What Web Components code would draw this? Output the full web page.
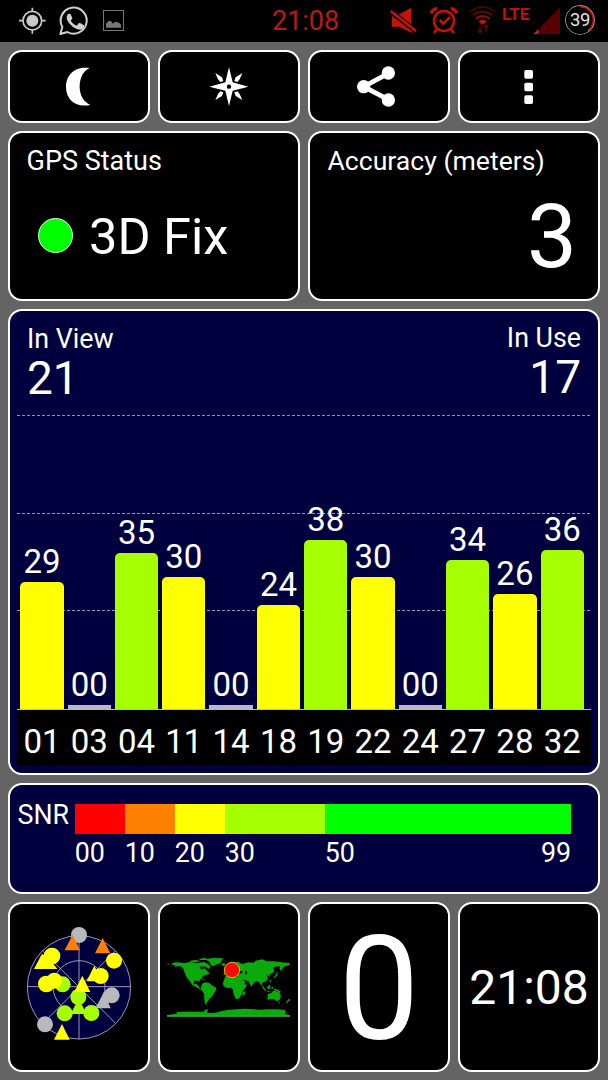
<!DOCTYPE html>
<html lang="en">
<head>
<meta charset="utf-8">
<title>GPS Status</title>
<style>
  body {
    margin: 0;
    width: 608px;
    height: 1080px;
    overflow: hidden;
    background: #646464;
    color: #fff;
    font-family: Roboto, "Liberation Sans", sans-serif;
    line-height: 1;
  }
</style>
</head>
<body>
<gps-screen></gps-screen>

<script>
function define(name, html, setup) {
  const template = document.createElement("template");
  template.innerHTML = html;
  customElements.define(name, class extends HTMLElement {
    constructor() {
      super();
      this.attachShadow({ mode: "open" });
      this.shadowRoot.append(template.content.cloneNode(true));
    }
    connectedCallback() {
      if (setup) setup(this, this.shadowRoot);
    }
  });
}

// every icon is drawn on a grid three times finer than its box
const ICONS = {
  target: [55, 18, 84, 90, `
    <circle cx="98" cy="62" r="28" fill="none" stroke="#c9c9c9" stroke-width="5"/>
    <circle cx="98" cy="62" r="18" fill="#c9c9c9"/>
    <path d="M98 23v13M98 88v13M58 62h13M124 62h14" stroke="#c9c9c9" stroke-width="5"/>`],
  phone: [174, 18, 93, 90, `
    <path d="M181 102L187 81A39 39 0 1 1 202 96Z" fill="none" stroke="#d0d0d0" stroke-width="6" stroke-linejoin="round"/>
    <path d="M203 43q5-4 9 0l5 11q0 4-5 8q7 11 18 15l6-7q3-2 6 0l10 6q2 10-9 13q-10 2-24-8q-14-11-18-22q-2-10 2-16z" fill="#d0d0d0"/>`],
  image: [306, 27, 69, 69, `
    <rect x="310.500" y="31.500" width="60" height="60" fill="none" stroke="#777" stroke-width="3"/>
    <path d="M318 83V72l7-8q4-3 8 0l6 7 6-5q4-2 7 1l7 3 4 4v9z" fill="#777"/>`],
  mute: [252, 15, 90, 90, `
    <path d="M264 45h17l41-22v58l4 18-42-19h-20z" fill="#c41308"/>
    <path d="M256 31L344 101" stroke="#000" stroke-width="16"/>
    <path d="M260 33L336 93" stroke="#c41308" stroke-width="8"/>
    <path d="M276 60L322 96" stroke="#c41308" stroke-width="5"/>`],
  alarm: [375, 15, 90, 90, `
    <g fill="none" stroke="#c41308" stroke-width="7.500">
      <circle cx="420" cy="63" r="30"/><path d="M407 60l11 11 20-20M399 87l-9 12M441 87l9 12"/>
      <path d="M381 40q5-12 18-15M459 40q-5-12-18-15" stroke-width="9"/>
    </g>`],
  wifi: [492, 12, 90, 93, `
    <g fill="none" stroke-width="6">
      <path d="M499 35q36-28 74 0" stroke="#420500"/>
      <path d="M507 45q29-21 58 0" stroke="#650900"/>
      <path d="M515 56q21-16 42 0" stroke="#980e06"/>
    </g>
    <path d="M523 64q13-9 26 0l-13 10z" fill="#c41308"/>
    <path d="M528 78v19M522 91l6 7 6-7M546 97V76M540 82l6-7 6 7" fill="none" stroke="#650900" stroke-width="4"/>`],
  signal: [687, 21, 84, 84, `
    <path d="M768 22v80h-80z" fill="#580000"/>
    <path d="M687 84h22v22h-22z" fill="#000"/>
    <path d="M704 86v16h-16z" fill="#d01a10"/>`],
  moon: [29, 156, 414, 207, `<path d="M268 204C216 197 197 232 197 260C197 294 220 324 270 315C248 304 238 284 238 260C238 235 248 213 268 204Z" fill="#fff"/>`],
  compass: [479, 156, 414, 207, `
    <g fill="#fff">
      <path d="M686 201l11 46 47 13-47 12-11 46-11-46-48-12 48-13z"/>
      <path d="M645 219l20 13 4 11-9 3-7-8zM726 219l-20 13-4 11 9 3 7-8zM645 300l20-12 4-11-9-3-7 8zM726 300l-20-12-4-11 9-3 7 8z"/>
    </g>
    <circle cx="686" cy="260" r="6.500"/>`],
  share: [18, 156, 414, 207, `
    <path d="M253 220L179 260L253 299" fill="none" stroke="#fff" stroke-width="14"/>
    <g fill="#fff"><circle cx="253" cy="219" r="20"/><circle cx="179" cy="260" r="20"/><circle cx="253" cy="300" r="20"/></g>`],
  more: [468, 156, 414, 207, `
    <g fill="#fff"><rect x="661" y="210" width="26" height="26" rx="5"/><rect x="661" y="248" width="26" height="26" rx="5"/><rect x="661" y="286" width="26" height="26" rx="5"/></g>`],
};

define("gps-icon", `<style>:host { display: block; flex: none } svg { display: block }</style>`, (host, root) => {
  const [x, y, w, h, shapes] = ICONS[host.getAttribute("name")];
  const box = document.createElement("div");
  box.innerHTML = `<svg width="${w / 3}" height="${h / 3}" viewBox="${x} ${y} ${w} ${h}">${shapes}</svg>`;
  root.append(box);
});

define("status-bar", `
  <style>
    :host { display: flex; align-items: flex-start; height: 42px; background: #000; color: #b81a16 }
    .left { display: flex; width: 254px; padding: 6px 0 0 18.333px; box-sizing: border-box }
    .left gps-icon:nth-child(2) { margin-left: 11.667px }
    .left gps-icon:nth-child(3) { margin: 3px 0 0 13px }
    .time { width: 103px; text-align: center; font-size: 27px; padding-top: 8px }
    .right { display: flex; padding: 5px 0 0 31px }
    .right gps-icon + gps-icon { margin-left: 11px }
    .right gps-icon[name="wifi"] { margin: -1px 0 0 9px }
    .lte { width: 31px; margin-left: 4px; padding-top: 1px; font-size: 17px; font-weight: 700; color: #c80d06; white-space: nowrap }
    .right gps-icon[name="signal"] { margin: 2px 0 0 -.500px }
    .battery {
      display: grid; place-items: center; width: 30px; height: 30px; margin-left: 4.500px; border-radius: 50%; box-sizing: border-box; padding-top: 1px;
      background: radial-gradient(#000 12.300px, transparent 12.800px), conic-gradient(#c80d06 39%, #777 0 40%, transparent 0);
      font-size: 18.500px; letter-spacing: -.5px; color: #e0e0e0; box-shadow: inset 0 0 0 1px #999;
    }
  </style>
  <div class="left"><gps-icon name="target"></gps-icon><gps-icon name="phone"></gps-icon><gps-icon name="image"></gps-icon></div>
  <div class="time">21:08</div>
  <div class="right">
    <gps-icon name="mute"></gps-icon>
    <gps-icon name="alarm"></gps-icon>
    <gps-icon name="wifi"></gps-icon>
    <span class="lte">LTE</span>
    <gps-icon name="signal"></gps-icon>
    <span class="battery">39</span>
  </div>
`);

define("panel-card", `
  <style>
    :host {
      display: flex; flex-direction: column; box-sizing: border-box; min-width: 0;
      border: 2.400px solid #fff; border-radius: 14px; background: #000;
    }
    :host([blue]) { background: #00003f }
    :host([center]) { align-items: center; justify-content: center }
  </style>
  <slot></slot>
`);

define("fix-status", `
  <style>
    :host { display: block; padding: 15px 0 0 16.500px }
    .label { font-size: 27px }
    .row { display: flex; align-items: center; gap: 16px; margin: 37px 0 0 11.500px }
    .dot { width: 35px; height: 35px; box-sizing: border-box; border: 1px solid #d8ffd8; border-radius: 50%; background: #0f0; margin-top: -3px }
    .value { font-size: 50.500px; white-space: nowrap }
  </style>
  <div class="label">GPS Status</div>
  <div class="row"><span class="dot"></span><span class="value">3D Fix</span></div>
`);

define("accuracy-value", `
  <style>
    :host { display: block; padding: 15px 21px 0 17.500px }
    .label { font-size: 26.600px; white-space: nowrap }
    .value { margin-top: 17.500px; font-size: 89px; text-align: right }
  </style>
  <div class="label">Accuracy (meters)</div>
  <div class="value">3</div>
`);

const SATELLITES = [
  ["01", "29", 127.5, "#ff0"],
  ["03", "00", 4.3, "#b8b8c6"],
  ["04", "35", 156.5, "#a6ff00"],
  ["11", "30", 132.5, "#ff0"],
  ["14", "00", 4.3, "#b8b8c6"],
  ["18", "24", 104.5, "#ff0"],
  ["19", "38", 169.5, "#a6ff00"],
  ["22", "30", 132, "#ff0"],
  ["24", "00", 4.3, "#b8b8c6"],
  ["27", "34", 149.5, "#a6ff00"],
  ["28", "26", 115, "#ff0"],
  ["32", "36", 159, "#a6ff00"],
];

define("signal-chart", `
  <style>
    :host { display: block; padding: 0 7px }
    .head { display: flex; justify-content: space-between; height: 104px; box-sizing: border-box; padding: 15.200px 10px 0 10px; font-size: 26.800px }
    .head div:last-child { text-align: right; margin-top: -1px }
    .head b { display: block; font-weight: 400; font-size: 46px; margin-top: 2px }
    .plot { display: grid; height: 294px }
    .grid, .bars { grid-area: 1 / 1 }
    .grid { display: flex; flex-direction: column }
    .grid i { height: 97.500px; flex: none }
    .grid i::before { content: ""; display: block; height: 1px; background: repeating-linear-gradient(90deg, #9090ac 0 3px, transparent 3px 5px) }
    .bars, .names { display: grid; grid-template-columns: repeat(12, 43.300px); column-gap: 4px; padding-left: 3.300px; font-size: 33px; text-align: center }
    .bars { align-items: end }
    .bar { border-radius: 5px 5px 0 0; margin-top: 4px }
    .bar.none { border-radius: 0 }
    .names { height: 55px; border-top: 1px solid #bbb; background: #000 }
    .names span { padding-top: 15px }
  </style>
  <div class="head">
    <div>In View<b>21</b></div>
    <div>In Use<b>17</b></div>
  </div>
  <div class="plot">
    <div class="grid"><i></i><i></i><i></i></div>
    <div class="bars"></div>
  </div>
  <div class="names"></div>
`, (host, root) => {
  root.querySelector(".bars").innerHTML = SATELLITES.map(([, snr, height, color]) =>
    `<div>${snr}<div class="bar${snr === "00" ? " none" : ""}" style="height: ${height}px; background: ${color}"></div></div>`).join("");
  root.querySelector(".names").innerHTML = SATELLITES.map(([id]) => `<span>${id}</span>`).join("");
});

define("snr-scale", `
  <style>
    :host { display: flex; padding: 17px 0 0 7.500px; font-size: 26.800px }
    .scale { display: grid; grid-template-columns: 50px 50px 50px 100px 246.500px; margin-top: 1.700px }
    .name { width: 57.200px }
    .scale i { display: block; height: 30.500px; background: var(--c) }
    .scale p { display: flex; justify-content: space-between; margin: 6px 0 0 }
  </style>
  <span class="name">SNR</span>
  <div class="scale">
    <div style="--c: #f00"><i></i><p>00</p></div>
    <div style="--c: #ff8000"><i></i><p>10</p></div>
    <div style="--c: #ff0"><i></i><p>20</p></div>
    <div style="--c: #a6ff00"><i></i><p>30</p></div>
    <div style="--c: #0f0"><i></i><p><span>50</span><span>99</span></p></div>
  </div>
`);

define("sky-plot", `
  <style>:host, svg { display: block }</style>
  <svg width="138" height="166" viewBox="30 27 414 498">
    <g fill="none" stroke="#b4b4cc" stroke-width="2.500">
      <circle cx="237" cy="277" r="155" fill="#00003f"/>
      <circle cx="237" cy="275" r="78"/>
      <path d="M237 122v310M82 275h310M128 168L346 384M346 168L128 386"/>
    </g>
    <g fill="#b9b9bd"><circle cx="237" cy="120" r="24"/><circle cx="135" cy="388" r="24"/><circle cx="335" cy="301" r="24"/><path d="M312 290l-25 50h45z"/></g>
    <g fill="#ff8000"><path d="M218 119l-24 47h46zM308 129l-23 46h46z"/></g>
    <g fill="#a6ff00"><circle cx="188" cy="268" r="24"/><circle cx="235" cy="306" r="24"/><circle cx="194" cy="355" r="24"/><circle cx="274" cy="354" r="24"/><path d="M236 311l-24 46h48z"/></g>
    <g fill="#ff0"><circle cx="156" cy="183" r="25"/><circle cx="342" cy="197" r="24"/><circle cx="139" cy="267" r="25"/><circle cx="163" cy="257" r="24"/><circle cx="302" cy="243" r="24"/>
      <path d="M126 176l-24 46h70l-16-20zM283 212l-23 47h47zM247 242l-24 49h48zM186 387l-24 47h47z"/></g>
  </svg>
`);

define("world-map", `
  <style>:host, svg { display: block }</style>
  <svg width="139" height="100" viewBox="15 0 417 300">
    <g fill="#0aaa0a">
      <path d="M50 70L62 67 90 69 105 66 125 70 139 67 147 74 144 82 138 78 134 83 142 89 148 84 160 96 164 101 154 104 146 107 139 113 134 120 133 127 128 122 118 122 116 128 118 133 125 131 127 136 132 138 132 143 142 150 136 149 124 142 112 135 104 123 96 113 90 101 86 88 80 80 70 78 58 82 61 76 53 75zM36 70l9 2-6 2zM104 63l15-3 15 2-5 4-20 1zM136 70l10-4 12 5 8 8-3 8-9-5-13-5zM130 57l20-3 8 4-20 3zM150 58L174 54 205 55 200 62 196 70 182 74 174 79 167 75 164 66zM196 71l13-2 2 4-8 3zM132 113l15 4 4 4-16-5z"/>
      <path d="M143 130l8-3 12 2 9 8 12 6-2 9-5 8-6 10-8 6-4 8-5 6 1 5-5-4-2-13-1-17-6-9-4-9 4-9z"/>
      <path d="M211 109l8-3 17-1 2 5 13 2 7 2 6 11 6 9 7-1-5 9-8 10-1 8-6 8-5 8-9 1-5-9-3-10-1-9-6-6-13 1-10-7-1-10 4-9zM269 153l3 2-5 12-4-1 1-8z"/>
      <path d="M206 107L206 99 215 98 212 90 222 84 232 78 228 72 240 67 250 66 262 72 280 67 296 68 302 62 322 58 335 64 356 64 372 66 404 69 404 76 390 79 384 83 378 93 373 87 376 79 360 80 354 84 358 92 352 100 344 103 346 112 339 106 335 106 339 115 333 124 322 128 320 132 323 138 318 136 314 129 308 123 300 125 293 133 290 140 284 131 281 124 270 121 262 116 269 124 272 128 259 136 250 122 246 113 234 108 228 104 222 104 214 100zM209 88l3-9 5 8-2 6-6 1zM199 75l10-3 3 3-6 3zM356 112l6-6 4-10 2 2-2 9-8 8z"/>
      <path d="M321 138l3 1 9 12-2 3-6-7zM336 141l8-7 3 5-3 8-5 1zM335 153l14 2-2 2-12-2zM350 139l5 3-3 6-3-1zM343 118l4 2 2 9-4-3zM357 147l10 1 12 8-7-1-7-3-8-1zM338 163L349 159 354 153 362 152 367 157 371 149 376 162 378 170 373 180 365 184 357 177 347 177 338 180zM370 186l5 0-2 5zM401 176l5 4-11 9-3 0z"/>
      <path d="M36 225L64 221 66 216 88 215 130 215 146 215 150 209 160 208 156 215 160 219 182 218 200 213 218 210 243 208 270 206 298 208 310 209 340 208 364 208 388 209 393 215 390 222 405 226V230H36z"/>
    </g>
    <path d="M36 228H405" stroke="#4f9c54" stroke-width="3"/>
    <g fill="#000"><path d="M250 96l8-3 6 2-4 5-9 1zM270 92l5 1 2 8-4 3-3-6zM231 103l10 2 8 6-12-2z"/></g>
    <circle cx="231" cy="90" r="23" fill="#ff0a00" stroke="#ffca28" stroke-width="2.500"/>
  </svg>
`);

define("gps-screen", `
  <style>
    :host { display: block }
    main { display: grid; grid-template-columns: repeat(4, 142px); grid-template-rows: 73px 170px 466px 110.500px 170px; gap: 8px; padding: 8px }
    .two { grid-column: span 2 }
    .four { grid-column: span 4 }
    .speed { font-size: 144px; padding-top: 6px }
    .clock { font-size: 48px; padding-top: 2px }
    world-map { padding-top: 6px }
  </style>
  <status-bar></status-bar>
  <main>
    <panel-card center><gps-icon name="moon"></gps-icon></panel-card>
    <panel-card center><gps-icon name="compass"></gps-icon></panel-card>
    <panel-card center><gps-icon name="share"></gps-icon></panel-card>
    <panel-card center><gps-icon name="more"></gps-icon></panel-card>
    <panel-card class="two"><fix-status></fix-status></panel-card>
    <panel-card class="two"><accuracy-value></accuracy-value></panel-card>
    <panel-card class="four" blue><signal-chart></signal-chart></panel-card>
    <panel-card class="four" blue><snr-scale></snr-scale></panel-card>
    <panel-card center><sky-plot></sky-plot></panel-card>
    <panel-card center><world-map></world-map></panel-card>
    <panel-card center><span class="speed">0</span></panel-card>
    <panel-card center><span class="clock">21:08</span></panel-card>
  </main>
`);
</script>
</body>
</html>
